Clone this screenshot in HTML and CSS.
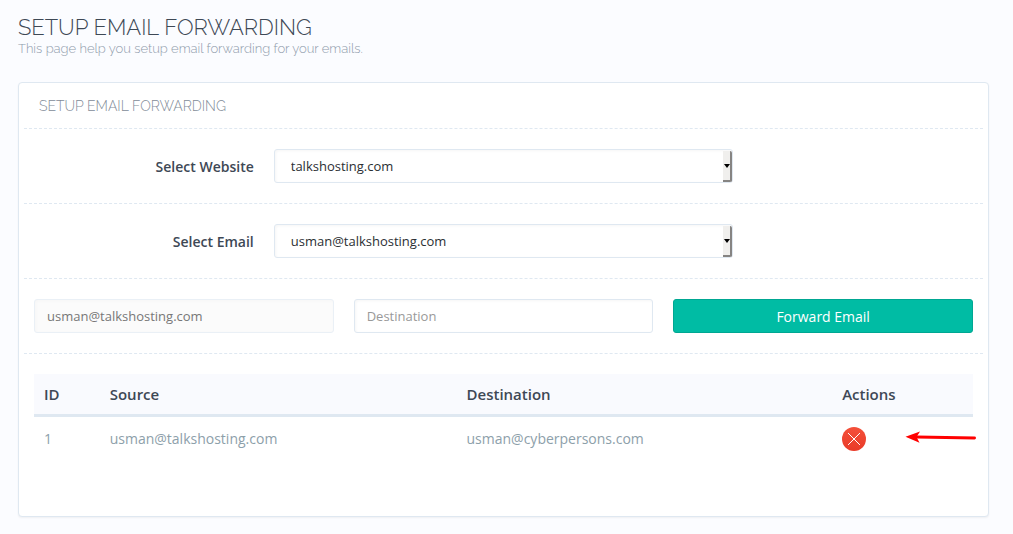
FILE: index.html
```html
<!DOCTYPE html>
<html lang="en">
<head>
  <meta charset="UTF-8">
  <title>Setup Email Forwarding</title>
  <link rel="stylesheet" href="styles.css">
</head>
<body>

  <div class="page-title">
    <h1>SETUP EMAIL FORWARDING</h1>
    <p>This page help you setup email forwarding for your emails.</p>
  </div>

  <div class="panel">
    <h2 class="panel-title">SETUP EMAIL FORWARDING</h2>

    <form>
      <div class="form-row">
        <label class="form-label" for="website">Select Website</label>
        <div class="select-box">
          <select id="website" class="form-control">
            <option>talkshosting.com</option>
          </select>
          <span class="select-arrow"></span>
        </div>
      </div>

      <div class="form-row">
        <label class="form-label" for="email">Select Email</label>
        <div class="select-box">
          <select id="email" class="form-control">
            <option>usman@talkshosting.com</option>
          </select>
          <span class="select-arrow"></span>
        </div>
      </div>

      <div class="forward-row">
        <input type="text" class="form-control" value="usman@talkshosting.com" aria-label="Source" disabled>
        <input type="text" class="form-control" placeholder="Destination" aria-label="Destination">
        <button type="button" class="btn">Forward Email</button>
      </div>
    </form>

    <div class="table-box">
      <table class="table">
        <thead>
          <tr>
            <th class="col-id">ID</th>
            <th class="col-source">Source</th>
            <th class="col-destination">Destination</th>
            <th>Actions</th>
          </tr>
        </thead>
        <tbody>
          <tr>
            <td>1</td>
            <td>usman@talkshosting.com</td>
            <td>usman@cyberpersons.com</td>
            <td class="actions">
              <button type="button" class="delete-btn" aria-label="Delete">
                <svg width="24" height="24" viewBox="0 0 24 24">
                  <defs>
                    <linearGradient id="red" x1="0" y1="0" x2="0" y2="1">
                      <stop offset="0" stop-color="#f4503a"/>
                      <stop offset="1" stop-color="#e93a28"/>
                    </linearGradient>
                  </defs>
                  <circle cx="12" cy="12" r="12" fill="url(#red)"/>
                  <path d="M6.3 6.3l11.4 11.4M17.7 6.3L6.3 17.7" stroke="#fff" stroke-width="1" stroke-linecap="round"/>
                </svg>
              </button>
              <svg class="pointer" width="71" height="12" viewBox="0 0 71 12">
                <path d="M12 6L69.5 7" stroke="#f00" stroke-width="3" stroke-linecap="round"/>
                <path d="M0.5 5.8L15 0.5L11.5 6L14.5 11.8z" fill="#f00"/>
              </svg>
            </td>
          </tr>
        </tbody>
      </table>
    </div>
  </div>

</body>
</html>
```
FILE: styles.css
```css
* {
  box-sizing: border-box;
}

body {
  margin: 0;
  padding: 15px 24px 17px 18px;
  background-color: #fbfcff;
  font-family: "Open Sans", Arial, sans-serif;
  font-size: 13px;
  color: #3e4855;
}

h1,
h2,
.page-title p {
  margin: 0;
  font-family: Raleway, Lato, sans-serif;
  font-weight: 300;
}

h1 {
  font-size: 22px;
  line-height: 24px;
}

.page-title p {
  font-size: 13px;
  line-height: 20px;
  color: #8f9bab;
}

.panel {
  margin-top: 23px;
  padding: 0 5px 35px;
  background-color: #fff;
  border: 1px solid #dfe8f1;
  border-radius: 4px;
  box-shadow: 0 1px 2px rgba(0, 0, 0, 0.05);
}

.panel-title {
  padding: 13px 15px 12px;
  font-size: 14px;
  line-height: 20px;
  color: #828c98;
}

.form-row,
.forward-row,
.table-box {
  border-top: 1px dashed #dfe8f1;
  padding: 20px 10px;
}

.form-row {
  display: grid;
  grid-template-columns: 1fr 2fr 1fr;
  padding: 20px 0;
  align-items: center;
}

.form-label {
  padding-right: 10px;
  text-align: right;
  font-size: 14px;
  font-weight: 600;
}

.select-box {
  position: relative;
  margin: 0 10px;
}

.forward-row {
  display: grid;
  grid-template-columns: repeat(3, 1fr);
  gap: 20px;
}

.form-control {
  display: block;
  width: 100%;
  height: 34px;
  padding: 6px 12px;
  font-family: inherit;
  font-size: 13px;
  color: #2b2f33;
  background-color: #fff;
  border: 1px solid #dfe8f1;
  border-radius: 3px;
  box-shadow: inset 1px 1px 3px #f6f6f6;
}

.form-control::placeholder {
  color: #999;
}

.form-control:disabled {
  color: #777;
  background-color: #fbfbfb;
  border-color: #eaf0f6;
}

select.form-control {
  appearance: none;
  padding: 0 16px;
}

.select-arrow {
  position: absolute;
  top: 2px;
  right: 1px;
  bottom: 1px;
  width: 9px;
  background-color: #f0efed;
  border: solid #868482;
  border-width: 0 2px 2px 0;
  border-radius: 0 2px 2px 0;
  pointer-events: none;
}

.select-arrow::after {
  content: "";
  position: absolute;
  top: 13px;
  right: 0;
  border: 3px solid transparent;
  border-top: 4px solid #000;
  border-bottom: 0;
}

.btn {
  height: 34px;
  font-family: inherit;
  font-size: 14px;
  color: #fff;
  background-color: #00bca4;
  border: 1px solid #00a792;
  border-radius: 3px;
  cursor: pointer;
}

.btn:hover {
  background-color: #00ceb4;
}

.table {
  width: 100%;
  border-collapse: collapse;
  font-size: 14px;
  line-height: 20px;
}

.table th {
  padding: 10px;
  text-align: left;
  font-size: 15px;
  font-weight: 600;
  background-color: #f9fafe;
  border-bottom: 3px solid #dfe8f1;
}

.table td {
  padding: 10px;
  color: #8da0aa;
}

.col-id {
  width: 7%;
}

.col-source {
  width: 38%;
}

.col-destination {
  width: 40%;
}

.table .actions {
  position: relative;
}

.delete-btn {
  display: block;
  width: 24px;
  height: 24px;
  padding: 0;
  background: none;
  border: none;
  cursor: pointer;
}

.delete-btn svg {
  display: block;
}

/* arrow pointing at the delete button */
.pointer {
  position: absolute;
  top: 14px;
  right: -3px;
}
```
